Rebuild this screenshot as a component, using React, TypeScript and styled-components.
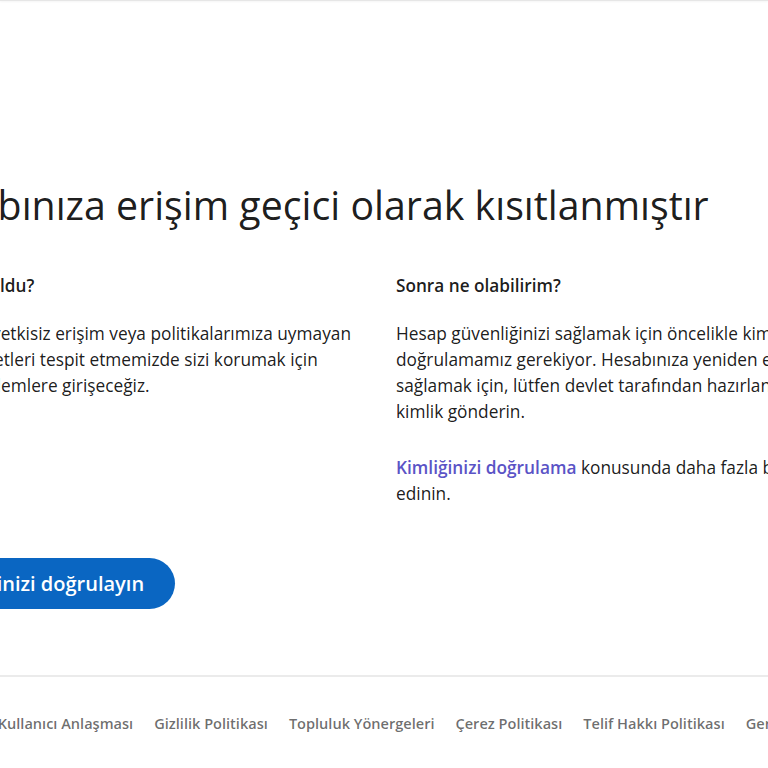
import { createGlobalStyle, styled } from "styled-components";

const GlobalStyle = createGlobalStyle`
  html, body {
    margin: 0;
    padding: 0;
    background: #ffffff;
    overflow: hidden;
  }
  body {
    font-family: "Open Sans", "Noto Sans", "Liberation Sans", sans-serif;
    color: rgba(0, 0, 0, 0.9);
  }
`;

const Page = styled.div`
  width: 768px;
  height: 768px;
  overflow: hidden;
  display: flex;
  flex-direction: column;
`;

const TopEdge = styled.div`
  height: 1px;
  background: #e6e6e6;
  box-shadow: 0 1px 2px rgba(0, 0, 0, 0.06);
  flex: none;
`;

const Main = styled.main`
  margin-left: -94px;
  width: 1100px;
  padding-top: 179px;
  flex: none;
`;

const Title = styled.h1`
  margin: 0;
  font-size: 39.3px;
  line-height: 50px;
  font-weight: 400;
  white-space: nowrap;
  color: rgba(0, 0, 0, 0.9);
`;

const Columns = styled.div`
  display: grid;
  grid-template-columns: 472px 448px;
  column-gap: 18px;
  margin-top: 44px;
`;

const Column = styled.section`
  display: flex;
  flex-direction: column;
`;

const Heading = styled.h2`
  margin: 0 0 23px;
  font-size: 17.2px;
  line-height: 24px;
  font-weight: 600;
  color: rgba(0, 0, 0, 0.9);
`;

const Text = styled.p`
  margin: 0 0 30px;
  font-size: 17.3px;
  line-height: 26px;
  font-weight: 400;
  color: rgba(0, 0, 0, 0.9);

  &:last-child {
    margin-bottom: 0;
  }
`;

const Link = styled.a`
  color: #5a53c6;
  font-weight: 600;
  text-decoration: none;
`;

const PrimaryButton = styled.button`
  margin-top: 51px;
  height: 51px;
  padding: 0 31px;
  border: none;
  border-radius: 26px;
  background: #0a66c2;
  color: #ffffff;
  font-family: inherit;
  font-size: 20px;
  font-weight: 600;
  cursor: pointer;
`;

const Footer = styled.footer`
  margin-top: 66px;
  border-top: 2px solid #ebebeb;
  padding-top: 35px;
  flex: none;
`;

const FooterList = styled.ul`
  list-style: none;
  margin: 0 0 0 -137px;
  padding: 0;
  display: flex;
  gap: 21px;
  white-space: nowrap;
`;

const FooterItem = styled.li`
  font-size: 14.57px;
  line-height: 22px;
  font-weight: 600;
  color: rgba(0, 0, 0, 0.58);
`;

const footerLinks = [
  "LinkedIn © 2024",
  "Kullanıcı Anlaşması",
  "Gizlilik Politikası",
  "Topluluk Yönergeleri",
  "Çerez Politikası",
  "Telif Hakkı Politikası",
  "Geri Bildirim Gönder",
];

export default function App() {
  return (
    <>
      <GlobalStyle />
      <Page>
        <TopEdge />
        <Main>
          <Title>Hesabınıza erişim geçici olarak kısıtlanmıştır</Title>
          <Columns>
            <Column>
              <Heading>Bu neden oldu?</Heading>
              <Text>
                Hesaplara yetkisiz erişim veya politikalarımıza uymayan diğer
                faaliyetleri tespit etmemizde sizi korumak için gereken önlemlere
                girişeceğiz.
              </Text>
            </Column>
            <Column>
              <Heading>Sonra ne olabilirim?</Heading>
              <Text>
                Hesap güvenliğinizi sağlamak için öncelikle kimliğinizi
                doğrulamamız gerekiyor. Hesabınıza yeniden erişim sağlamak için,
                lütfen devlet tarafından hazırlanmış bir kimlik gönderin.
              </Text>
              <Text>
                <Link href="#">Kimliğinizi doğrulama</Link> konusunda daha fazla
                bilgi edinin.
              </Text>
            </Column>
          </Columns>
          <PrimaryButton>Kimliğinizi doğrulayın</PrimaryButton>
        </Main>
        <Footer>
          <FooterList>
            {footerLinks.map((label) => (
              <FooterItem key={label}>{label}</FooterItem>
            ))}
          </FooterList>
        </Footer>
      </Page>
    </>
  );
}
